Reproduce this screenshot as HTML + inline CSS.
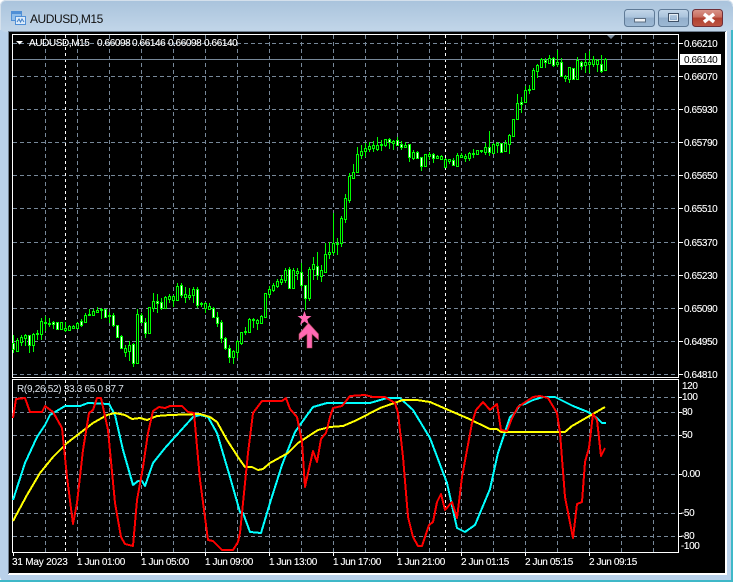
<!DOCTYPE html>
<html><head><meta charset="utf-8"><title>AUDUSD,M15</title>
<style>
html,body{margin:0;padding:0;background:#fff;width:736px;height:582px;overflow:hidden}
svg{display:block}
text{font-family:"Liberation Sans",sans-serif;font-size:10px;letter-spacing:-.4px;fill:#fff;stroke:#fff;stroke-width:.12px}
.c{shape-rendering:crispEdges}
</style></head><body>
<svg width="736" height="582" viewBox="0 0 736 582" xmlns="http://www.w3.org/2000/svg">
<defs>
<linearGradient id="tb" x1="0" y1="0" x2="0" y2="1"><stop offset="0" stop-color="#a9c3dc"/><stop offset="1" stop-color="#c2d6e9"/></linearGradient>
<linearGradient id="b" x1="0" y1="0" x2="0" y2="1"><stop offset="0" stop-color="#c4d7ea"/><stop offset=".45" stop-color="#aac3dc"/><stop offset=".5" stop-color="#92aecb"/><stop offset="1" stop-color="#9db9d4"/></linearGradient>
<linearGradient id="r" x1="0" y1="0" x2="0" y2="1"><stop offset="0" stop-color="#d9968b"/><stop offset=".45" stop-color="#c96d5e"/><stop offset=".5" stop-color="#b0402f"/><stop offset="1" stop-color="#bd5644"/></linearGradient>
</defs>
<rect x="0" y="0" width="733" height="582" rx="6" fill="#b9d1ea"/>
<rect x="0" y="0" width="733" height="32" rx="6" fill="url(#tb)"/>
<path d="M0.500 30V6.500Q0.500 0.500 6.500 0.500H726.500Q732.500 0.500 732.500 6.500" fill="none" stroke="#d4e0ec"/>
<path class="c" d="M0 580h733v2H0zM731 30h2v552h-2z" fill="#3fb8c8"/>
<rect x="8" y="31" width="719" height="544" fill="#fff"/>
<rect x="8" y="31" width="718" height="1" fill="#6f7f90"/>
<rect x="8" y="31" width="1" height="543" fill="#6f7f90"/>
<rect x="9" y="32" width="716" height="541" fill="#000"/>

<!-- title -->
<g class="c">
<rect x="11.500" y="11.500" width="10" height="9" fill="#8fbdea" stroke="#4f8fd6"/>
<rect x="12" y="12" width="9" height="2" fill="#4f8fd6"/>
<rect x="15.500" y="16.500" width="10" height="8" fill="#dcebfa" stroke="#4f8fd6"/>
</g>
<path d="M17 22l2-3 1.500 3 1.500-3 2 3" fill="none" stroke="#3f7fc6"/>
<text x="30" y="23" style="font-size:12px;letter-spacing:-.45px;fill:#111;stroke:none">AUDUSD,M15</text>

<!-- buttons -->
<rect x="624.500" y="9.500" width="30" height="17" rx="3" fill="url(#b)" stroke="#5f7a96"/>
<rect x="658.500" y="9.500" width="30" height="17" rx="3" fill="url(#b)" stroke="#5f7a96"/>
<rect x="692.500" y="9.500" width="30" height="17" rx="3" fill="url(#r)" stroke="#6f2f38"/>
<rect x="634.500" y="18.500" width="11" height="3.500" fill="#eef2f6" stroke="#5a6c80"/>
<rect x="668.500" y="13.500" width="10" height="8" fill="none" stroke="#3e5066"/>
<rect x="669.500" y="14.500" width="8" height="6" fill="none" stroke="#e6edf4"/>
<rect x="671" y="16" width="5" height="3" fill="#a6bfd9"/>
<path d="M704 14l10 8M714 14l-10 8" stroke="#fff" stroke-width="3.400" fill="none"/>

<!-- grid -->
<g class="c" fill="none">
<path stroke="#778899" stroke-dasharray="4 3" d="M13 43.500H678M13 76.500H678M13 109.500H678M13 142.500H678M13 175.500H678M13 208.500H678M13 242.500H678M13 275.500H678M13 308.500H678M13 341.500H678M13 374.500H678M13 397.500H678M13 412.500H678M13 435.500H678M13 474.500H678M13 513.500H678M13 536.500H678"/>
<path stroke="#778899" stroke-dasharray="4 3" d="M45.500 35V377M77.500 35V377M109.500 35V377M141.500 35V377M173.500 35V377M205.500 35V377M237.500 35V377M269.500 35V377M301.500 35V377M333.500 35V377M365.500 35V377M397.500 35V377M429.500 35V377M461.500 35V377M493.500 35V377M525.500 35V377M557.500 35V377M589.500 35V377M621.500 35V377M653.500 35V377M45.500 380V552M77.500 380V552M109.500 380V552M141.500 380V552M173.500 380V552M205.500 380V552M237.500 380V552M269.500 380V552M301.500 380V552M333.500 380V552M365.500 380V552M397.500 380V552M429.500 380V552M461.500 380V552M493.500 380V552M525.500 380V552M557.500 380V552M589.500 380V552M621.500 380V552M653.500 380V552"/>
<path stroke="#fff" stroke-dasharray="3 3" d="M65.500 35V377M65.500 380V552M445.500 35V377M445.500 380V552"/>
<path stroke="#778899" d="M13 59.500H678"/>
<path stroke="#fff" d="M12.500 34.500H678.500V377.500H12.500ZM12.500 379.500H678.500V552.500H12.500Z"/>
<path stroke="#fff" d="M679 43.500h4M679 76.500h4M679 109.500h4M679 142.500h4M679 175.500h4M679 208.500h4M679 242.500h4M679 275.500h4M679 308.500h4M679 341.500h4M679 374.500h4M679 397.500h3M679 412.500h3M679 435.500h3M679 474.500h3M679 513.500h3M679 536.500h3M13.500 553v3M77.500 553v3M141.500 553v3M205.500 553v3M269.500 553v3M333.500 553v3M397.500 553v3M461.500 553v3M525.500 553v3M589.500 553v3"/>
</g>
<path d="M607 35h8l-4 4z" fill="#778899"/>

<!-- wicks -->
<path class="c" fill="none" stroke="#00ff00" d="M13.500 335V353M17.500 338V351M21.500 335V346M25.500 334V346M29.500 335V353M33.500 333V352M37.500 330V340M41.500 318V340M45.500 316V331M49.500 318V327M53.500 321V329M57.500 322V330M61.500 322V330M65.500 322V332M69.500 325V331M73.500 325V329M77.500 322V329M81.500 319V327M85.500 313V322M89.500 309V316M93.500 309V315M97.500 307V313M101.500 308V319M105.500 309V317M109.500 312V323M113.500 313V327M117.500 325V338M121.500 335V349M125.500 345V357M129.500 341V361M133.500 343V367M137.500 309V364M141.500 313V323M145.500 318V338M149.500 307V333M153.500 293V312M157.500 294V313M161.500 298V310M165.500 296V309M169.500 294V303M173.500 295V307M177.500 283V301M181.500 283V298M185.500 287V303M189.500 288V300M193.500 287V303M197.500 287V308M201.500 302V307M205.500 302V313M209.500 303V309M213.500 307V318M217.500 312V327M221.500 320V343M225.500 337V350M229.500 345V363M233.500 350V364M237.500 340V358M241.500 332V345M245.500 327V335M249.500 318V333M253.500 318V328M257.500 319V330M261.500 315V324M265.500 293V318M269.500 286V298M273.500 283V292M277.500 279V288M281.500 275V285M285.500 268V283M289.500 267V289M293.500 268V288M297.500 268V280M301.500 263V288M305.500 285V310M309.500 267V301M313.500 257V280M317.500 252V280M321.500 265V282M325.500 243V272M329.500 242V259M333.500 213V255M337.500 238V255M341.500 216V247M345.500 194V223M349.500 173V203M353.500 164V178M357.500 147V172M361.500 145V159M365.500 143V157M369.500 142V152M373.500 141V152M377.500 137V151M381.500 140V151M385.500 139V147M389.500 138V149M393.500 140V150M397.500 137V145M401.500 141V150M405.500 142V147M409.500 144V162M413.500 150V160M417.500 151V159M421.500 157V171M425.500 154V166M429.500 152V160M433.500 153V163M437.500 155V159M441.500 155V160M445.500 158V168M449.500 159V164M453.500 158V165M457.500 153V166M461.500 153V158M465.500 154V162M469.500 152V161M473.500 149V158M477.500 150V154M481.500 150V153M485.500 143V155M489.500 131V156M493.500 143V153M497.500 142V153M501.500 143V152M505.500 140V152M509.500 134V154M513.500 119V136M517.500 94V120M521.500 97V113M525.500 86V103M529.500 85V94M533.500 68V89M537.500 64V78M541.500 58V68M545.500 58V68M549.500 55V64M553.500 57V67M557.500 50V67M561.500 58V77M565.500 75V82M569.500 67V83M573.500 68V80M577.500 57V79M581.500 61V70M585.500 53V73M589.500 51V73M593.500 56V67M597.500 59V72M601.500 55V73M605.500 58V70"/>
<!-- black bodies -->
<path class="c" fill="#000" stroke="#00ff00" d="M16.500 340.500h2v11h-2zM20.500 337.500h2v5h-2zM24.500 335.500h2v3h-2zM32.500 334.500h2v11h-2zM40.500 321.500h2v13h-2zM44.500 322.500h2v1h-2zM48.500 323.500h2v1h-2zM60.500 322.500h2v7h-2zM64.500 328.500h2v2h-2zM68.500 326.500h2v4h-2zM72.500 326.500h2v2h-2zM76.500 323.500h2v5h-2zM84.500 315.500h2v7h-2zM88.500 314.500h2v1h-2zM92.500 311.500h2v4h-2zM96.500 310.500h2v2h-2zM100.500 309.500h2v1h-2zM108.500 315.500h2v1h-2zM124.500 348.500h2v4h-2zM128.500 345.500h2v6h-2zM136.500 314.500h2v49h-2zM148.500 307.500h2v26h-2zM152.500 301.500h2v7h-2zM164.500 297.500h2v11h-2zM168.500 296.500h2v3h-2zM172.500 296.500h2v4h-2zM176.500 286.500h2v14h-2zM184.500 294.500h2v3h-2zM188.500 295.500h2v2h-2zM192.500 289.500h2v6h-2zM200.500 303.500h2v1h-2zM204.500 303.500h2v5h-2zM208.500 306.500h2v3h-2zM232.500 351.500h2v6h-2zM236.500 341.500h2v11h-2zM240.500 332.500h2v11h-2zM244.500 331.500h2v1h-2zM248.500 319.500h2v13h-2zM252.500 319.500h2v1h-2zM256.500 320.500h2v3h-2zM260.500 316.500h2v7h-2zM264.500 293.500h2v24h-2zM268.500 289.500h2v5h-2zM272.500 285.500h2v5h-2zM276.500 281.500h2v5h-2zM280.500 279.500h2v3h-2zM284.500 270.500h2v10h-2zM292.500 270.500h2v18h-2zM296.500 271.500h2v2h-2zM308.500 269.500h2v29h-2zM312.500 264.500h2v5h-2zM320.500 270.500h2v6h-2zM324.500 254.500h2v18h-2zM328.500 252.500h2v2h-2zM332.500 243.500h2v9h-2zM336.500 243.500h2v1h-2zM340.500 218.500h2v25h-2zM344.500 198.500h2v21h-2zM348.500 176.500h2v24h-2zM352.500 172.500h2v6h-2zM356.500 154.500h2v18h-2zM360.500 151.500h2v4h-2zM364.500 148.500h2v3h-2zM368.500 146.500h2v3h-2zM372.500 145.500h2v3h-2zM376.500 145.500h2v4h-2zM380.500 144.500h2v1h-2zM384.500 139.500h2v6h-2zM392.500 141.500h2v2h-2zM404.500 145.500h2v2h-2zM412.500 152.500h2v6h-2zM424.500 154.500h2v12h-2zM428.500 154.500h2v2h-2zM436.500 156.500h2v2h-2zM440.500 156.500h2v3h-2zM444.500 159.500h2v8h-2zM448.500 159.500h2v2h-2zM456.500 155.500h2v11h-2zM460.500 155.500h2v2h-2zM464.500 156.500h2v2h-2zM468.500 153.500h2v5h-2zM472.500 153.500h2v1h-2zM476.500 150.500h2v4h-2zM480.500 150.500h2v1h-2zM484.500 147.500h2v5h-2zM492.500 144.500h2v9h-2zM496.500 143.500h2v2h-2zM504.500 143.500h2v8h-2zM508.500 135.500h2v9h-2zM512.500 119.500h2v17h-2zM516.500 103.500h2v16h-2zM524.500 90.500h2v12h-2zM528.500 89.500h2v1h-2zM532.500 70.500h2v19h-2zM536.500 65.500h2v6h-2zM540.500 59.500h2v8h-2zM548.500 58.500h2v5h-2zM556.500 62.500h2v2h-2zM564.500 76.500h2v2h-2zM568.500 67.500h2v12h-2zM576.500 60.500h2v19h-2zM584.500 62.500h2v3h-2zM588.500 62.500h2v2h-2zM592.500 59.500h2v5h-2zM596.500 60.500h2v4h-2zM604.500 59.500h2v11h-2z"/>
<!-- white bodies -->
<path class="c" fill="#fff" stroke="#00ff00" d="M12.500 343.500h2v6h-2zM28.500 335.500h2v10h-2zM36.500 333.500h2v1h-2zM52.500 322.500h2v2h-2zM56.500 322.500h2v7h-2zM80.500 321.500h2v4h-2zM104.500 309.500h2v8h-2zM112.500 315.500h2v10h-2zM116.500 325.500h2v12h-2zM120.500 336.500h2v12h-2zM132.500 344.500h2v19h-2zM140.500 315.500h2v7h-2zM144.500 322.500h2v11h-2zM156.500 301.500h2v2h-2zM160.500 302.500h2v6h-2zM180.500 285.500h2v10h-2zM196.500 289.500h2v16h-2zM212.500 308.500h2v9h-2zM216.500 317.500h2v6h-2zM220.500 322.500h2v16h-2zM224.500 338.500h2v10h-2zM228.500 348.500h2v9h-2zM288.500 269.500h2v19h-2zM300.500 272.500h2v13h-2zM304.500 285.500h2v13h-2zM316.500 266.500h2v9h-2zM388.500 139.500h2v3h-2zM396.500 140.500h2v5h-2zM400.500 144.500h2v3h-2zM408.500 144.500h2v13h-2zM416.500 152.500h2v6h-2zM420.500 157.500h2v9h-2zM432.500 154.500h2v4h-2zM452.500 160.500h2v5h-2zM488.500 147.500h2v5h-2zM500.500 143.500h2v9h-2zM520.500 102.500h2v2h-2zM544.500 60.500h2v2h-2zM552.500 58.500h2v7h-2zM560.500 62.500h2v14h-2zM572.500 68.500h2v11h-2zM580.500 62.500h2v4h-2zM600.500 64.500h2v7h-2z"/>

<!-- star + arrow -->
<polygon points="304.500,311 306.300,316 311.500,316 307.300,319.200 309,325 304.500,321.500 300,325 301.700,319.200 297.500,316 302.700,316" fill="#ff69b4"/>
<polygon points="308.500,323 318.500,334 318.500,340 312,334 312,348 307,348 307,334 299,340 299,334" fill="#ff69b4" stroke="#b04a5a" stroke-width=".6"/>

<!-- indicator lines -->
<g class="c" fill="none" stroke-width="2" stroke-linejoin="round">
<polyline stroke="#00ffff" points="13,500 25,463 37,437 45,425 50,415 65,406 80,406 88,403 109,404 115,415 123,450 133,485 138,481 142,481 145,486 153,463 165,448 193,417 200,415 208,417 217,433 230,477 240,512 243,513 250,532 261,533 270,503 282,465 295,432 305,418 313,407 327,403 370,403 387,398 400,398 413,410 430,438 447,483 457,528 465,532 475,525 490,489 498,453 510,417 515,413 520,405 525,404 533,400 543,397 555,397 565,402 573,406 588,412 597,418 602,423 606,423"/>
<polyline stroke="#ffff00" points="13,521 27,495 40,473 53,457 67,443 80,433 93,423 107,415 115,413 125,415 132,419 140,418 147,420 157,416 170,415 200,414 210,417 217,422 227,440 240,460 245,467 252,467 258,470 263,469 270,463 288,453 298,443 318,430 330,427 343,426 357,420 380,408 403,400 417,400 430,402 453,412 467,418 490,429 497,429 501,432 565,432 572,426 605,407"/>
<polyline stroke="#ff0000" points="13,418 16,399 25,398 30,412 42,412 45,406 53,412 62,428 67,477 73,524 77,503 83,450 89,413 93,410 97,398 101,398 108,430 115,503 121,537 125,544 133,546 137,500 143,467 148,433 153,411 159,407 165,408 170,406 182,406 188,412 194,413 200,480 208,540 213,541 222,550 233,550 238,542 240,533 243,503 248,453 253,413 262,401 282,401 286,398 290,409 297,417 302,442 305,487 308,473 313,451 317,462 321,439 326,433 330,417 333,408 342,406 350,396 365,395 373,397 385,397 395,403 398,413 403,457 408,517 413,537 418,546 422,546 429,525 433,522 437,502 441,494 445,510 452,502 457,518 462,477 467,450 472,423 476,410 483,402 490,410 497,404 501,430 507,431 512,418 518,407 533,397 540,396 548,398 557,413 560,433 565,497 573,538 577,504 582,502 585,462 589,448 593,414 597,420 601,456 605,448"/>
</g>

<!-- info text -->
<path d="M16 41h7l-3.500 3.500z" fill="#fff"/>
<text x="29" y="46">AUDUSD,M15</text>
<text x="97" y="46">0.66098</text>
<text x="132" y="46">0.66146</text>
<text x="168" y="46">0.66098</text>
<text x="204" y="46">0.66140</text>
<text x="17" y="392" style="fill:#dfe6ee;stroke:none;letter-spacing:-.3px">R(9,26,52) 33.3 65.0 87.7</text>

<!-- price axis -->
<text x="684" y="47">0.66210</text>
<rect x="680" y="54" width="41" height="11" fill="#fff"/>
<text x="684" y="63" style="fill:#000;stroke:none">0.66140</text>
<text x="684" y="80">0.66070</text>
<text x="684" y="113">0.65930</text>
<text x="684" y="146">0.65790</text>
<text x="684" y="179">0.65650</text>
<text x="684" y="212">0.65510</text>
<text x="684" y="246">0.65370</text>
<text x="684" y="279">0.65230</text>
<text x="684" y="312">0.65090</text>
<text x="684" y="345">0.64950</text>
<text x="684" y="378">0.64810</text>
<text x="682" y="389">120</text>
<text x="682" y="400">100</text>
<text x="682" y="415">80</text>
<text x="682" y="438">50</text>
<text x="682" y="477">0.00</text>
<text x="681" y="516">-50</text>
<text x="681" y="539">-80</text>
<text x="681" y="549">-100</text>

<!-- time axis -->
<text x="12" y="565" style="letter-spacing:-.2px">31 May 2023</text>
<text x="77" y="565">1 Jun 01:00</text>
<text x="141" y="565">1 Jun 05:00</text>
<text x="205" y="565">1 Jun 09:00</text>
<text x="269" y="565">1 Jun 13:00</text>
<text x="333" y="565">1 Jun 17:00</text>
<text x="397" y="565">1 Jun 21:00</text>
<text x="461" y="565">2 Jun 01:15</text>
<text x="525" y="565">2 Jun 05:15</text>
<text x="589" y="565">2 Jun 09:15</text>
</svg>
</body></html>
